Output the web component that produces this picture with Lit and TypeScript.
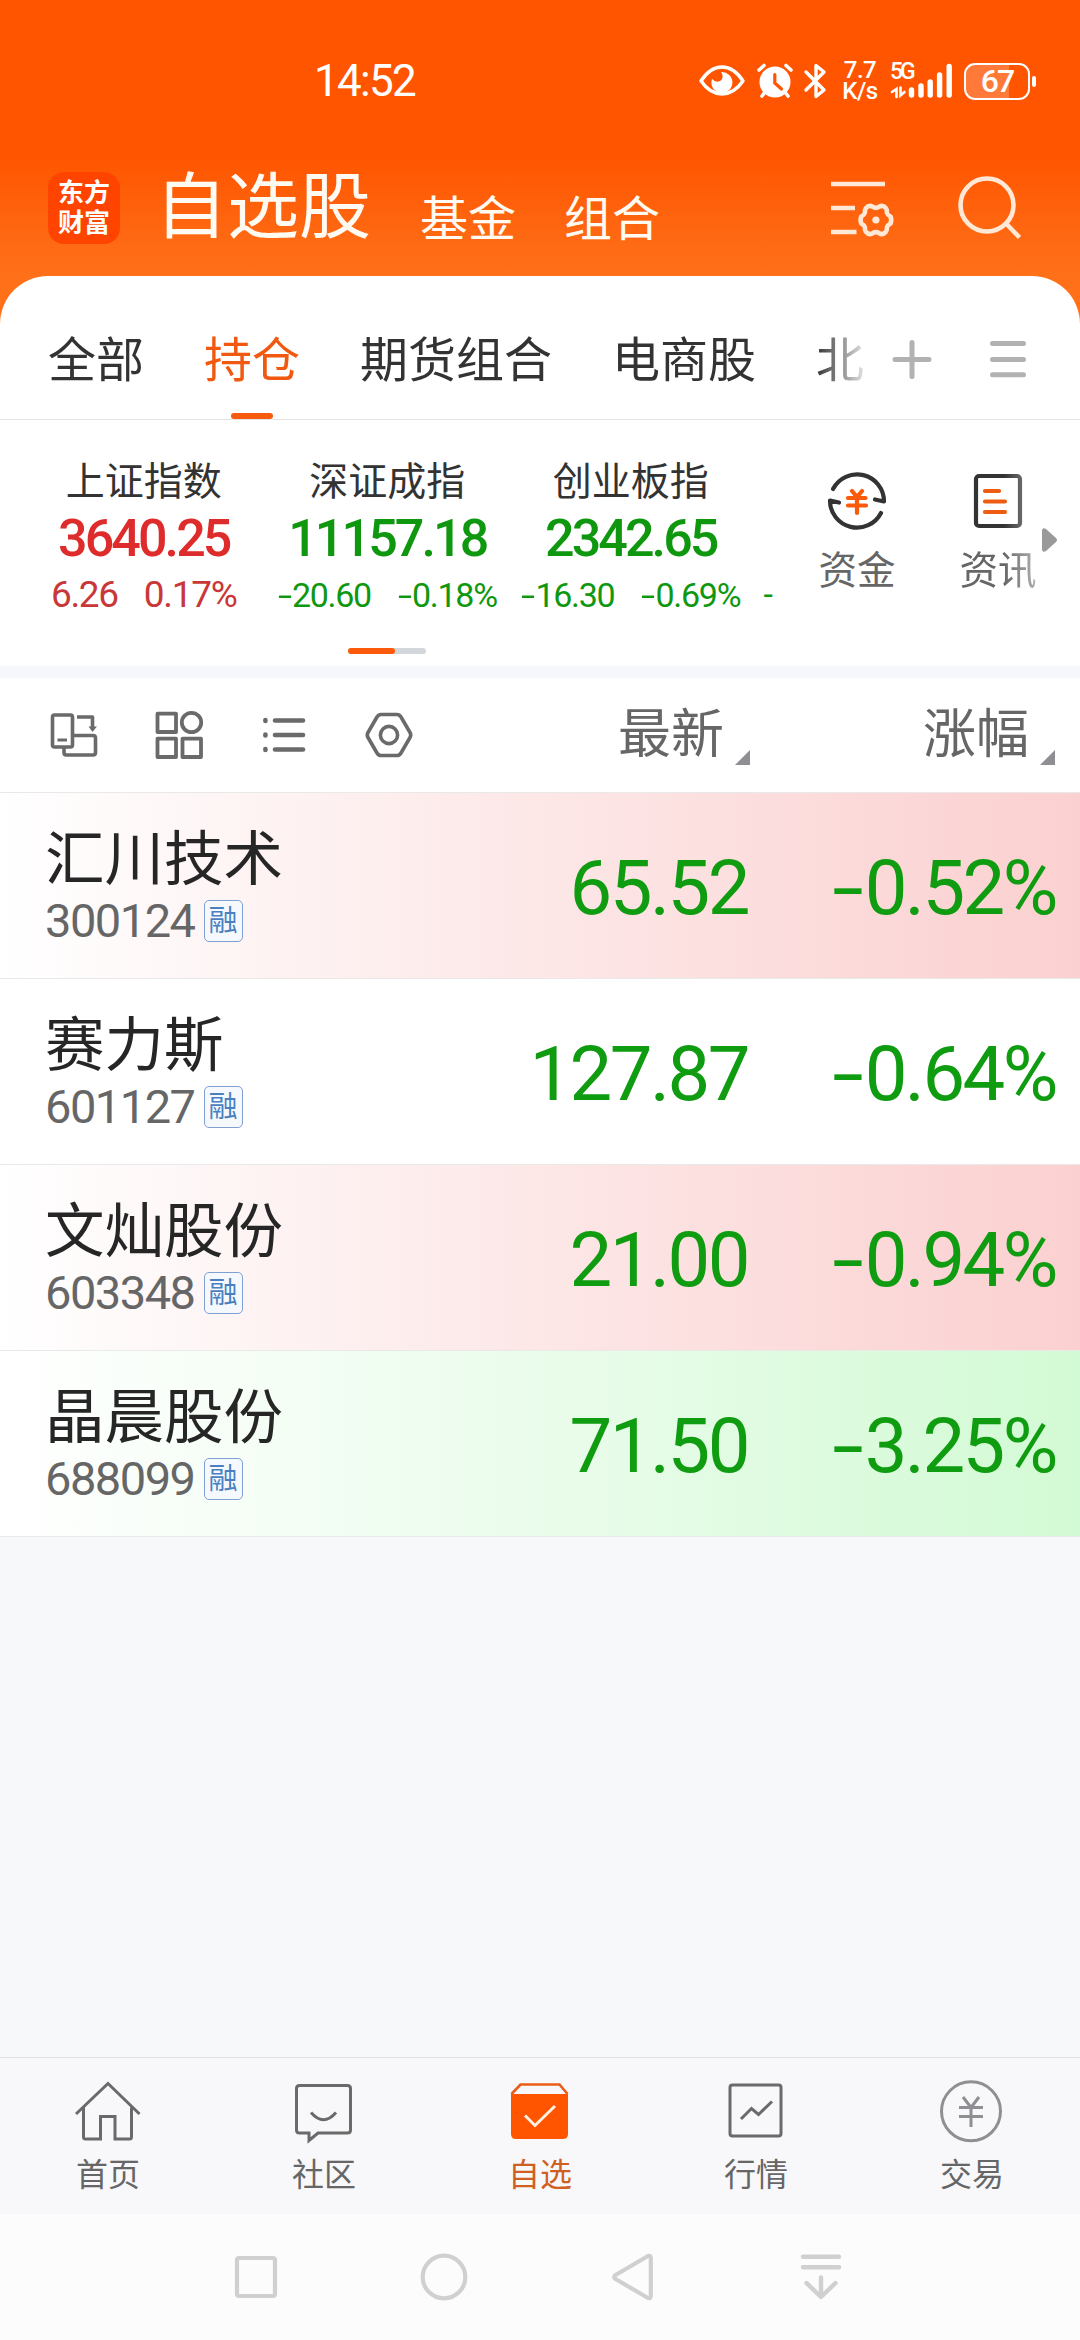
import { LitElement, html, css, svg } from "lit";
import { customElement, property } from "lit/decorators.js";
import { classMap } from "lit/directives/class-map.js";

interface IndexQuote { name: string; value: string; change: string; pct: string; up: boolean; }
interface Stock { name: string; code: string; price: string; pct: string; tint: string; }

const indices: IndexQuote[] = [
  { name: "上证指数", value: "3640.25", change: "6.26", pct: "0.17%", up: true },
  { name: "深证成指", value: "11157.18", change: "-20.60", pct: "-0.18%", up: false },
  { name: "创业板指", value: "2342.65", change: "-16.30", pct: "-0.69%", up: false },
];

const stocks: Stock[] = [
  { name: "汇川技术", code: "300124", price: "65.52", pct: "-0.52%", tint: "red" },
  { name: "赛力斯", code: "601127", price: "127.87", pct: "-0.64%", tint: "none" },
  { name: "文灿股份", code: "603348", price: "21.00", pct: "-0.94%", tint: "red" },
  { name: "晶晨股份", code: "688099", price: "71.50", pct: "-3.25%", tint: "green" },
];

const base = css`
  :host { display: block; font-family: Roboto, "Noto Sans CJK SC", sans-serif; white-space: nowrap; }
  * { box-sizing: border-box; }
  svg { display: block; flex: none; overflow: visible; }
  .dash { display: inline-block; transform: scaleX(1.5); margin: 0 0.12em 0 0.06em; }
`;

// The hyphen is stretched so that it reads as a minus sign beside the digits.
const signed = (t: string) =>
  t.startsWith("-") ? html`<span class="dash">-</span>${t.slice(1)}` : t;

@customElement("status-bar")
class StatusBar extends LitElement {
  static styles = [base, css`
    .bar { display: flex; align-items: center; height: 162px; padding: 0 44px 0 314px; color: #fff; }
    .time { font-size: 44px; line-height: 50px; letter-spacing: -1.7px; flex: 1; }
    .eye { margin-right: 12px; }
    .alarm { margin-right: 11px; }
    .bt { margin-right: 15px; }
    .speed { width: 36px; margin-right: 12px; text-align: center; font-size: 24px; line-height: 21px; font-weight: 500; letter-spacing: -0.5px; }
    .net { display: grid; width: 63px; margin-right: 11px; }
    .net > * { grid-area: 1 / 1; }
    .gen { font-size: 23px; line-height: 22px; height: 36px; letter-spacing: -3px; font-weight: 500; margin-top: -2px; }
    .battery { display: flex; align-items: center; }
    .cell { width: 66px; height: 37px; border: 2.5px solid #fff; border-radius: 11px; text-align: center;
      font-size: 32px; line-height: 33px; font-weight: 500; letter-spacing: -2px;
      background: linear-gradient(90deg, rgba(255,255,255,.22) 69%, transparent 69%); }
    .nub { width: 4px; height: 11px; border-radius: 2px; background: #fff; margin-left: 2px; }
  `];
  render() {
    return html`<div class="bar">
      <span class="time">14:52</span>
      <svg class="eye" width="46" height="34" viewBox="697 64 46 34" fill="none" stroke="#fff" stroke-width="3.4">
        <path d="M699 81Q708 67 720 67T741 81Q732 94 720 94T699 81Z" stroke-linejoin="round"/>
        <path d="M719 72A10.5 10.5 0 1 1 710 79Q715 84 719.500 80Q722 76 719 72Z" fill="#fff" stroke="none"/>
      </svg>
      <svg class="alarm" width="36" height="36" viewBox="755 63 36 36" fill="none" stroke="#fff" stroke-width="3.6" stroke-linecap="round">
        <circle cx="773" cy="82" r="15.500" fill="#fff" stroke="none"/>
        <path d="M757 70L762 65.500M789 70L784 65.500M760 96L764 91M786 96L782 91"/>
        <path d="M772.800 74.500V83L779.500 89" stroke="#ff5500" stroke-width="3.200"/>
      </svg>
      <svg class="bt" width="23" height="36" viewBox="803 63 23 36" fill="none" stroke="#fff" stroke-width="3.4" stroke-linecap="round" stroke-linejoin="round">
        <path d="M805 72L823 90L815 96.500V65.500L823 72L805 90"/>
      </svg>
      <div class="speed"><div>7.7</div><div>K/s</div></div>
      <div class="net">
        <span class="gen">5G</span>
        <svg width="63" height="36" viewBox="889 63 63 36" fill="none" stroke="#fff" stroke-width="5.4" stroke-linecap="round">
          <path d="M910.500 90V95M920 86V95M929.200 82V95M938.600 75V95M948.200 66.500V95"/>
          <path d="M895.500 97V89L891 92M899.500 87.500V95.500L903.500 92" stroke-width="2.600"/>
        </svg>
      </div>
      <div class="battery"><div class="cell">67</div><div class="nub"></div></div>
    </div>`;
  }
}

@customElement("title-bar")
class TitleBar extends LitElement {
  static styles = [base, css`
    .bar { display: flex; align-items: center; height: 92px; padding: 0 58px 0 48px; color: #fffaf2; }
    .logo { width: 72px; height: 72px; border-radius: 16px; background: #ff4400; color: #fff; text-align: center;
      font-size: 26px; line-height: 30px; font-weight: 700; padding-top: 6px; }
    .titles { display: flex; align-items: flex-end; flex: 1; margin-left: 35px; }
    .main { font-size: 72px; line-height: 90px; }
    .sub { font-size: 48px; line-height: 67px; }
    .gap1 { margin-left: 49px; }
    .gap2 { margin-left: 48px; }
    .find { margin-left: 64px; }
  `];
  render() {
    return html`<div class="bar">
      <div class="logo"><div>东方</div><div>财富</div></div>
      <div class="titles">
        <span class="main">自选股</span><span class="sub gap1">基金</span><span class="sub gap2">组合</span>
      </div>
      <svg width="64" height="64" viewBox="830 176 64 64" fill="none" stroke="#ffe8d6" stroke-width="4.600">
        <path d="M831 184H885M831 208H855M831 232H856.500"/>
        <path stroke-linejoin="round" d="M872.600 206.800Q875.900 208.800 879.200 206.800Q882.800 204.600 886 208.300Q887.300 210.300 886.800 212.500Q887.500 215 890.500 216.500Q892 220 890.500 223.500Q887.500 225 886.800 227.500Q887.300 230 886 231.700Q882.800 235.400 879.200 233.200Q875.900 231.200 872.600 233.200Q869 235.400 865.800 231.700Q864.500 230 865 227.500Q864.300 225 861.300 223.500Q859.800 220 861.300 216.500Q864.300 215 865 212.500Q864.500 210.300 865.800 208.300Q869 204.600 872.600 206.800Z"/>
        <circle cx="875.900" cy="220" r="3.600" fill="#ffe8d6" stroke="none"/>
      </svg>
      <svg class="find" width="64" height="64" viewBox="958 176 64 64" fill="none" stroke="#ffe8d6" stroke-width="4.600">
        <circle cx="987" cy="205" r="26.500"/><path d="M1006 223.500L1019.500 237.500"/>
      </svg>
    </div>`;
  }
}

@customElement("group-tabs")
class GroupTabs extends LitElement {
  static styles = [base, css`
    .bar { display: flex; height: 144px; padding: 0 52px 0 48px; border-bottom: 1.500px solid #e4e4e4; }
    .tabs { display: flex; gap: 60px; width: 816px; overflow: hidden; color: #333;
      -webkit-mask-image: linear-gradient(90deg, #000 768px, transparent 824px); mask-image: linear-gradient(90deg, #000 768px, transparent 824px); }
    .tab { display: flex; flex-direction: column; align-items: center; flex: none; font-size: 48px; line-height: 56px; padding-top: 57px; }
    .tab.on { color: #f0590f; }
    .line { width: 42px; height: 6px; border-radius: 3px; background: #f65a0d; margin-top: 24px; }
    .tools { display: flex; flex: 1; justify-content: space-between; padding: 63px 0 0 28px; }
  `];
  render() {
    return html`<div class="bar">
      <div class="tabs">
        ${["全部", "持仓", "期货组合", "电商股", "北"].map((t) => html`
          <div class=${classMap({ tab: true, on: t === "持仓" })}>${t}${t === "持仓" ? html`<div class="line"></div>` : ""}</div>`)}
      </div>
      <div class="tools">
        <svg width="40" height="40" viewBox="892 339 40 40" stroke="#b2b2b2" stroke-width="5" stroke-linecap="round">
          <path d="M895 359.500H929M912 342.500V376.500"/>
        </svg>
        <svg width="38" height="40" viewBox="990 339 38 40" stroke="#b2b2b2" stroke-width="5" stroke-linecap="round">
          <path d="M992.500 343.500H1023.500M992.500 359.500H1023.500M992.500 374.800H1023.500"/>
        </svg>
      </div>
    </div>`;
  }
}

@customElement("index-strip")
class IndexStrip extends LitElement {
  static styles = [base, css`
    .strip { display: flex; height: 246px; }
    .left { width: 776px; display: flex; flex-direction: column; align-items: center; }
    .quotes { display: flex; width: 776px; overflow: hidden; padding-left: 22px; }
    .q { width: 243.500px; flex: none; text-align: center; padding-top: 38px; }
    .name { font-size: 39px; line-height: 48px; color: #333; }
    .value { font-size: 52px; line-height: 66px; font-weight: 500; letter-spacing: -2.900px; }
    .delta { display: flex; justify-content: center; gap: 27px; font-size: 34px; line-height: 46px; letter-spacing: -1.300px; }
    .up .value { color: #de2b2b; }
    .up .delta { color: #c93838; font-size: 37px; letter-spacing: -1.300px; gap: 26px; }
    .down { color: #0f980f; }
    .more { flex: none; font-size: 34px; line-height: 46px; padding-top: 151px; margin-left: 11px; color: #0f980f; }
    .pager { display: flex; width: 78px; height: 6px; border-radius: 3px; background: #d3d6db; margin: 30px 0 0 -2px; }
    .thumb { width: 47px; border-radius: 3px; background: #fb5a0a; }
    .links { display: flex; flex: 1; padding: 50px 0 0 42px; color: #666; font-size: 38.500px; line-height: 50px; }
    .link { display: flex; flex-direction: column; align-items: center; gap: 14px; width: 78px; }
    .news { margin-left: 63px; -webkit-mask-image: linear-gradient(90deg, #000 45px, rgba(0,0,0,.5) 78px); mask-image: linear-gradient(90deg, #000 45px, rgba(0,0,0,.5) 78px); }
    .arrow { margin: 57px 0 0 4px; }
  `];
  render() {
    return html`<div class="strip">
      <div class="left">
        <div class="quotes">
          ${indices.map((q) => html`<div class=${classMap({ q: true, up: q.up, down: !q.up })}>
            <div class="name">${q.name}</div>
            <div class="value">${q.value}</div>
            <div class="delta"><span>${signed(q.change)}</span><span>${signed(q.pct)}</span></div>
          </div>`)}
          <div class="more">-</div>
        </div>
        <div class="pager"><div class="thumb"></div></div>
      </div>
      <div class="links">
        <div class="link">
          <svg width="60" height="62" viewBox="826 470 60 62" fill="none" stroke="#333" stroke-width="4.200" stroke-linecap="round" stroke-linejoin="round">
            <path d="M832 489A27 27 0 0 1 883 501.500L874 499.500"/>
            <path d="M880 513A27 27 0 0 1 829 500.500L838 502.500" />
            <path stroke="#fb5a0a" d="M851 491L856 497L861 491M847 498H864.500M847 505.500H865M856 498V513"/>
          </svg>
          <span>资金</span>
        </div>
        <div class="link news">
          <svg width="60" height="62" viewBox="967 470 60 62" fill="none" stroke-width="4.200" stroke-linecap="round">
            <rect x="975" y="476" width="44" height="50" rx="3" stroke="#333"/>
            <path stroke="#ee5c14" d="M984 491H998M984 501.500H1004M984 512H1004"/>
          </svg>
          <span>资讯</span>
        </div>
        <svg class="arrow" width="16" height="26" viewBox="1040 527 16 26"><path fill="#999" d="M1041 530Q1042 527 1045 529L1055 538Q1057 540 1055 542L1045 551Q1042 553 1041 550Z"/></svg>
      </div>
    </div>`;
  }
}

@customElement("list-head")
class ListHead extends LitElement {
  static styles = [base, css`
    .head { display: flex; align-items: center; height: 115px; padding: 0 25px 0 50px; border-bottom: 1.500px solid #e9e9e9; color: #666; }
    .tools { display: flex; gap: 57px; flex: 1; }
    .col { display: flex; align-items: flex-end; gap: 11px; font-size: 53px; line-height: 66px; }
    .last { margin-left: 173px; }
    .tri { margin-bottom: 3px; }
  `];
  render() {
    const tri = html`<svg class="tri" width="15" height="15" viewBox="0 0 15 15"><path d="M15 0V15H0Z" fill="#8e8e93"/></svg>`;
    return html`<div class="head">
      <div class="tools">
        <svg width="48" height="48" viewBox="50 711 48 48" fill="none" stroke="#6a6a6a" stroke-width="3.600" stroke-linejoin="round">
          <rect x="52.500" y="715" width="20" height="32" rx="2"/>
          <path d="M57.500 740H67" stroke-width="3"/>
          <path d="M73 735.500H93Q95.500 735.500 95.500 738V752.500Q95.500 755 93 755H66.500Q64 755 64 752.500V748"/>
          <path d="M77 717H92.500V727"/><path d="M88.500 726.500H97L92.500 732Z" fill="#6a6a6a" stroke="none"/>
        </svg>
        <svg width="48" height="48" viewBox="155 711 48 48" fill="none" stroke="#6a6a6a" stroke-width="3.800" stroke-linejoin="round">
          <rect x="157.500" y="713.700" width="18.500" height="18.300"/><circle cx="191.500" cy="722.500" r="9.700"/>
          <rect x="157.500" y="738.700" width="18.500" height="18.300"/><rect x="182.500" y="738.700" width="18.500" height="18.300"/>
        </svg>
        <svg width="48" height="48" viewBox="260 711 48 48" fill="none" stroke="#6a6a6a" stroke-width="4.600" stroke-linecap="round">
          <path d="M275 720.500H303M275 735H303M275 749.500H303M265.400 720V721M265.400 734.500V735.500M265.400 749V750"/>
        </svg>
        <svg width="48" height="48" viewBox="365 711 48 48" fill="none" stroke="#6a6a6a" stroke-width="3.600" stroke-linejoin="round">
          <path d="M381 714.500H397Q399.500 714.500 401 717L410 732.500Q411.500 735 410 737.500L401 753Q399.500 755.500 397 755.500H381Q378.500 755.500 377 753L368 737.500Q366.500 735 368 732.500L377 717Q378.500 714.500 381 714.500Z"/>
          <circle cx="389" cy="735" r="8.600"/>
        </svg>
      </div>
      <div class="col"><span>最新</span>${tri}</div>
      <div class="col last"><span>涨幅</span>${tri}</div>
    </div>`;
  }
}

@customElement("stock-row")
class StockRow extends LitElement {
  @property({ attribute: false }) stock!: Stock;
  static styles = [base, css`
    .row { display: grid; grid-template-columns: 1fr 360px 308px; align-items: center; height: 186px; padding: 0 24px 0 45px;
      background: #fff; border-bottom: 1.500px solid #e9e9e9; }
    .red { background: linear-gradient(90deg, #fff 0%, #fde7e7 50%, #fbd0d0 100%); }
    .green { background: linear-gradient(90deg, #fff 0%, #eafceb 50%, #d2fad4 100%); }
    .name { font-size: 59.500px; line-height: 70px; color: #262626; }
    .sub { display: flex; align-items: center; gap: 9px; height: 52px; }
    .code { font-size: 47px; letter-spacing: -1.500px; line-height: 50px; color: #666; }
    .badge { width: 39px; height: 42px; border: 1.500px solid #7fa0d0; border-radius: 5px; text-align: center;
      font-size: 29px; line-height: 40px; color: #4a80bf; background: #f5f9fe; }
    .num { font-size: 76px; line-height: 90px; padding-top: 4px; letter-spacing: -2.500px; color: #109c10; text-align: right; }
  `];
  render() {
    const s = this.stock;
    return html`<div class=${classMap({ row: true, red: s.tint === "red", green: s.tint === "green" })}>
      <div>
        <div class="name">${s.name}</div>
        <div class="sub"><span class="code">${s.code}</span><span class="badge">融</span></div>
      </div>
      <div class="num">${s.price}</div>
      <div class="num">${signed(s.pct)}</div>
    </div>`;
  }
}

@customElement("bottom-tabs")
class BottomTabs extends LitElement {
  static styles = [base, css`
    .bar { display: grid; grid-template-columns: repeat(5, 1fr); height: 157px; border-top: 1.500px solid #e0e0e2; background: #f8f8fb; }
    .item { display: flex; flex-direction: column; align-items: center; padding-top: 21px; font-size: 32px; line-height: 44px; gap: 10px; color: #666; }
    .on { color: #cf5f22; }
  `];
  render() {
    const items = [
      { t: "首页", x: 108, g: svg`<path d="M76 2114L108 2083.500L139.500 2114M83.500 2107.500V2137Q83.500 2139 85.500 2139H100.500V2116.500H115V2139H129.500Q131.500 2139 131.500 2137V2107.500"/>` },
      { t: "社区", x: 324, g: svg`<path d="M299.500 2085.500H347.500Q350.500 2085.500 350.500 2088.500V2130Q350.500 2133 347.500 2133H318L309 2140.500V2133H299.500Q296.500 2133 296.500 2130V2088.500Q296.500 2085.500 299.500 2085.500Z"/><path d="M311 2112.500Q323.500 2127 336 2112.500"/>` },
      { t: "自选", x: 540, g: svg`<path d="M511.500 2094L520.500 2084.500H559.500L567.500 2094" stroke="#ea5c18" stroke-width="2.600"/><path d="M511 2094H568V2134Q568 2139 563 2139H516Q511 2139 511 2134Z" fill="#ff5500" stroke="none"/><path d="M525 2115.500L535 2125.500L555 2106" stroke="#fff0e0"/>` },
      { t: "行情", x: 756, g: svg`<rect x="730" y="2085" width="51" height="51" rx="2.500"/><path d="M741 2119L751.500 2108.500L758.500 2114.500L772 2101.500"/>` },
      { t: "交易", x: 972, g: svg`<g stroke="#8f8f93"><circle cx="971" cy="2111.300" r="29.500"/><path d="M963 2097L971 2107.500L979 2097M959 2107.500H983M959 2116.500H983M971 2107.500V2127"/></g>` },
    ];
    return html`<div class="bar">${items.map((i) => html`
      <div class=${classMap({ item: true, on: i.t === "自选" })}>
        <svg width="68" height="64" viewBox="${i.x - 34} 2079 68 64" fill="none" stroke="#6a6a6a" stroke-width="3">${i.g}</svg>
        <span>${i.t}</span>
      </div>`)}</div>`;
  }
}

@customElement("app-root")
class AppRoot extends LitElement {
  static styles = [base, css`
    .page { display: flex; flex-direction: column; width: 1080px; height: 2340px; overflow: hidden; background: #f7f8fa; }
    .top { background: linear-gradient(180deg, #ff5500 0px, #ff5500 155px, #ff6a14 245px, #ff7018 276px); }
    .card { margin-top: 22px; background: #fff; border-radius: 48px 48px 0 0; }
    .band { height: 12px; background: #f6f7fa; }
    .list { background: #fff; }
    .space { flex: 1; }
    .nav { display: flex; align-items: center; justify-content: space-between; height: 126px; padding: 0 235px 0 232px; background: #fcfcfc; }
  `];
  render() {
    return html`<div class="page">
      <div class="top">
        <status-bar></status-bar>
        <title-bar></title-bar>
        <div class="card"><group-tabs></group-tabs><index-strip></index-strip></div>
      </div>
      <div class="band"></div>
      <div class="list">
        <list-head></list-head>
        ${stocks.map((s) => html`<stock-row .stock=${s}></stock-row>`)}
      </div>
      <div class="space"></div>
      <bottom-tabs></bottom-tabs>
      <div class="nav">
        <svg width="48" height="50" viewBox="232 2252 48 50" fill="none" stroke="#d0d0d0" stroke-width="4.200"><rect x="237" y="2258" width="38" height="38" rx="2"/></svg>
        <svg width="48" height="50" viewBox="420 2252 48 50" fill="none" stroke="#d0d0d0" stroke-width="4.200"><circle cx="444" cy="2277" r="21.300"/></svg>
        <svg width="48" height="50" viewBox="608 2252 48 50" fill="none" stroke="#d0d0d0" stroke-width="4.200" stroke-linejoin="round"><path d="M614.500 2275L647 2256Q649.800 2255 649.800 2258V2295.500Q649.800 2299 647 2298L614.500 2279Q612 2277 614.500 2275Z"/></svg>
        <svg width="48" height="50" viewBox="797 2252 48 50" fill="none" stroke="#d0d0d0" stroke-width="4.400" stroke-linecap="round" stroke-linejoin="round"><path d="M803 2256.700H839M803 2267.300H839M821 2277.500V2296.500M806.500 2283L821 2297L835.500 2283"/></svg>
      </div>
    </div>`;
  }
}
